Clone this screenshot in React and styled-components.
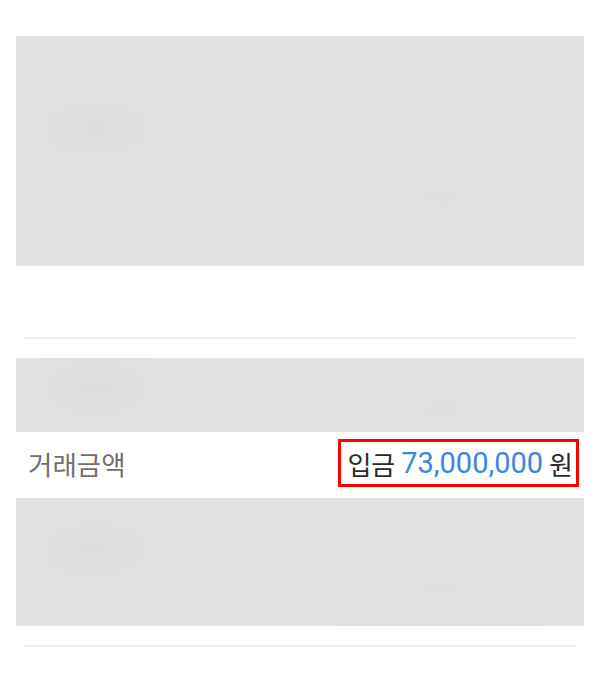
import React from "react";
import styled, { createGlobalStyle } from "styled-components";

const GlobalStyle = createGlobalStyle`
  body {
    margin: 0;
    background: #ffffff;
    font-family: "Noto Sans CJK KR", "Noto Sans", sans-serif;
  }
`;

const Page = styled.div`
  display: flex;
  flex-direction: column;
  padding: 36px 16px 0;
`;

const Placeholder = styled.div`
  height: ${(p) => p.h}px;
  background:
    radial-gradient(ellipse 90px 45px at 14% 40%, rgba(0, 0, 0, 0.025), transparent),
    radial-gradient(ellipse 200px 60px at 75% 70%, rgba(0, 0, 0, 0.012), transparent),
    #e2e2e2;
`;

const Divider = styled.div`
  height: 2px;
  margin: ${(p) => p.top}px 8px ${(p) => p.bottom}px;
  background: #eeeff1;
`;

const Row = styled.div`
  display: flex;
  align-items: center;
  justify-content: space-between;
  box-sizing: border-box;
  height: 66px;
  padding: 0 5px 4px 12px;
`;

const Label = styled.span`
  color: #6f6f72;
  font-size: 26.5px;
`;

const Amount = styled.div`
  display: inline-flex;
  align-items: center;
  box-sizing: border-box;
  height: 48px;
  padding: 0 3px 0 6px;
  border: 3px solid #ff0000;
  gap: 6px;
  color: #2b2b2b;
  font-size: 26px;
`;

const Number = styled.span`
  color: #3b86e3;
  font-family: Roboto, "Noto Sans", sans-serif;
  font-size: 29px;
`;

export default function App() {
  return (
    <>
      <GlobalStyle />
      <Page>
        <Placeholder h={230} />
        <Divider top={71} bottom={19} />
        <Placeholder h={74} />
        <Row>
          <Label>거래금액</Label>
          <Amount>
            <span>입금</span>
            <Number>73,000,000</Number>
            <span>원</span>
          </Amount>
        </Row>
        <Placeholder h={128} />
        <Divider top={19} bottom={0} />
      </Page>
    </>
  );
}
